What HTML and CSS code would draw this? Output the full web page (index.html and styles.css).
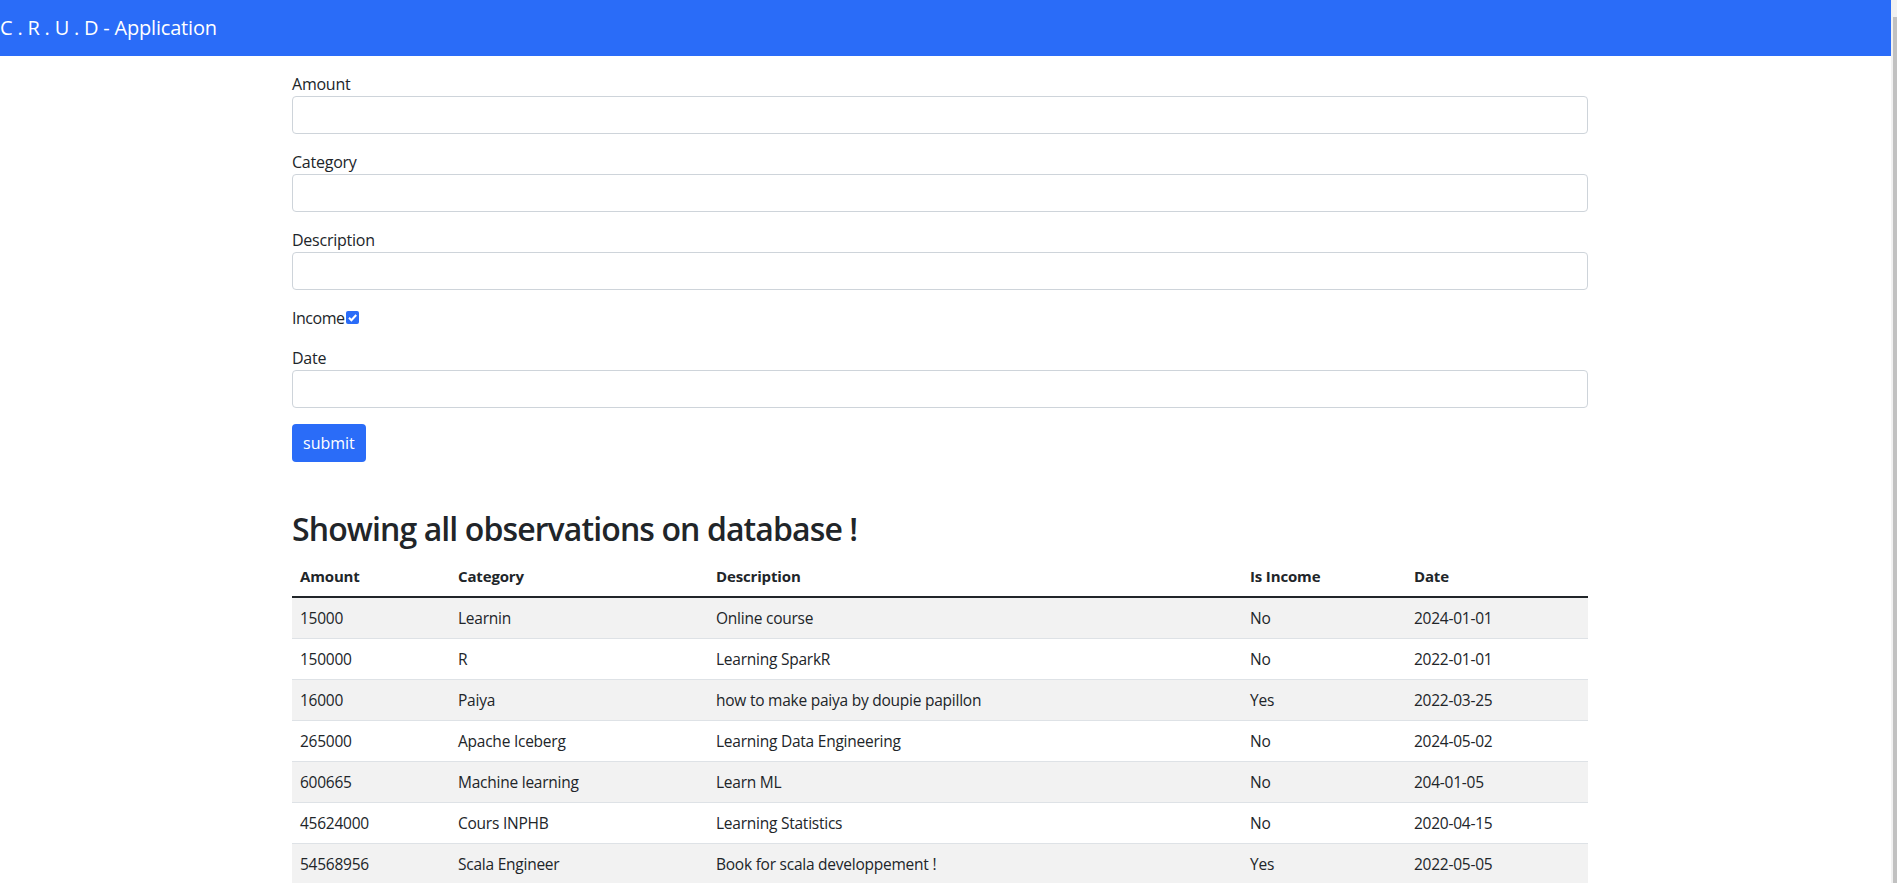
FILE: index.html
```html
<!DOCTYPE html>
<html lang="en">
<head>
<meta charset="utf-8">
<title>C . R . U . D - Application</title>
<link rel="stylesheet" href="styles.css">
</head>
<body>
<div class="window">
  <div class="page">
    <nav class="navbar">
      <span class="brand">C . R . U . D - Application</span>
    </nav>
    <main class="container">
      <form class="form">
        <div class="field">
          <label class="label" for="amount">Amount</label>
          <input class="input" id="amount" type="text">
        </div>
        <div class="field">
          <label class="label" for="category">Category</label>
          <input class="input" id="category" type="text">
        </div>
        <div class="field">
          <label class="label" for="description">Description</label>
          <input class="input" id="description" type="text">
        </div>
        <div class="field check-row">
          <label class="label-inline" for="income">Income</label><input class="check" id="income" type="checkbox" checked>
        </div>
        <div class="field">
          <label class="label" for="date">Date</label>
          <input class="input" id="date" type="text">
        </div>
        <button class="btn" type="button">submit</button>
      </form>

      <h2 class="title">Showing all observations on database !</h2>
      <table class="table">
        <colgroup>
          <col class="c-amount">
          <col class="c-category">
          <col class="c-description">
          <col class="c-income">
          <col class="c-date">
        </colgroup>
        <thead>
          <tr><th>Amount</th><th>Category</th><th>Description</th><th>Is Income</th><th>Date</th></tr>
        </thead>
        <tbody>
          <tr><td>15000</td><td>Learnin</td><td>Online course</td><td>No</td><td>2024-01-01</td></tr>
          <tr><td>150000</td><td>R</td><td>Learning SparkR</td><td>No</td><td>2022-01-01</td></tr>
          <tr><td>16000</td><td>Paiya</td><td>how to make paiya by doupie papillon</td><td>Yes</td><td>2022-03-25</td></tr>
          <tr><td>265000</td><td>Apache Iceberg</td><td>Learning Data Engineering</td><td>No</td><td>2024-05-02</td></tr>
          <tr><td>600665</td><td>Machine learning</td><td>Learn ML</td><td>No</td><td>204-01-05</td></tr>
          <tr><td>45624000</td><td>Cours INPHB</td><td>Learning Statistics</td><td>No</td><td>2020-04-15</td></tr>
          <tr><td>54568956</td><td>Scala Engineer</td><td>Book for scala developpement !</td><td>Yes</td><td>2022-05-05</td></tr>
        </tbody>
      </table>
    </main>
  </div>
  <div class="scrollbar"><div class="thumb"></div></div>
</div>
</body>
</html>
```
FILE: styles.css
```css
html, body {
  margin: 0;
  padding: 0;
  height: 100%;
  overflow: hidden;
}
body {
  font-family: "Open Sans", "Noto Sans", sans-serif;
  font-size: 16px;
  line-height: 1.5;
  color: #212529;
  background: #fff;
  letter-spacing: -0.015em;
}
.window {
  display: flex;
  height: 883px;
}
.page {
  width: 1891px;
  flex: none;
  overflow: hidden;
}
.scrollbar {
  flex: 1;
  background: #f1f1f1;
  display: flex;
  padding-left: 2px;
  padding-top: 17px;
}
.thumb {
  flex: 1;
  background: #c1c1c1;
}
.navbar {
  height: 56px;
  background: #2a6cf8;
  display: flex;
  align-items: center;
}
.brand {
  color: #fff;
  font-size: 20px;
  line-height: 30px;
  margin-top: -1px;
  letter-spacing: -0.01em;
}
.container {
  width: 1296px;
  margin-left: 280px;
  padding: 16px 12px 0;
}
.form {
  display: flex;
  flex-direction: column;
  align-items: flex-start;
}
.field {
  width: 100%;
  margin-bottom: 16px;
}
.label {
  display: block;
  line-height: 24px;
}
.input {
  display: block;
  box-sizing: border-box;
  width: 100%;
  height: 38px;
  margin: 0;
  padding: 6px 12px;
  font: inherit;
  border: 1px solid #ced4da;
  border-radius: 4px;
  background: #fff;
}
.check-row {
  display: flex;
  align-items: center;
  height: 24px;
}
.label-inline {
  line-height: 24px;
  letter-spacing: -0.03em;
}
.check {
  appearance: none;
  -webkit-appearance: none;
  width: 13px;
  height: 13px;
  margin: 0 0 0 1px;
  border-radius: 2px;
  background: #2a6cf8 url("data:image/svg+xml,%3Csvg xmlns='http://www.w3.org/2000/svg' viewBox='0 0 13 13'%3E%3Cpath d='M3 6.8l2.4 2.4L10.2 4' fill='none' stroke='%23fff' stroke-width='2'/%3E%3C/svg%3E") center/13px 13px no-repeat;
  position: relative;
  top: -1px;
}
.btn {
  height: 38px;
  padding: 0 11px;
  font: inherit;
  color: #fff;
  background: #2a6cf8;
  border: 0;
  border-radius: 4px;
}
.title {
  margin: 48px 0 8px;
  font-size: 32px;
  font-weight: 600;
  line-height: 1.2;
  letter-spacing: -0.028em;
}
.table {
  width: 1296px;
  table-layout: fixed;
  border-collapse: collapse;
}
.c-amount { width: 158px; }
.c-category { width: 258px; }
.c-description { width: 534px; }
.c-income { width: 164px; }
.c-date { width: auto; }
.table th,
.table td {
  text-align: left;
  padding: 8px;
  line-height: 24px;
}
.table th {
  font-weight: 700;
  font-size: 15px;
  letter-spacing: -0.01em;
  border-bottom: 2px solid #212529;
}
.table td {
  border-bottom: 1px solid #dee2e6;
  font-size: 15.5px;
}
.table tbody tr:nth-child(odd) td {
  background: #f2f2f2;
}
```
